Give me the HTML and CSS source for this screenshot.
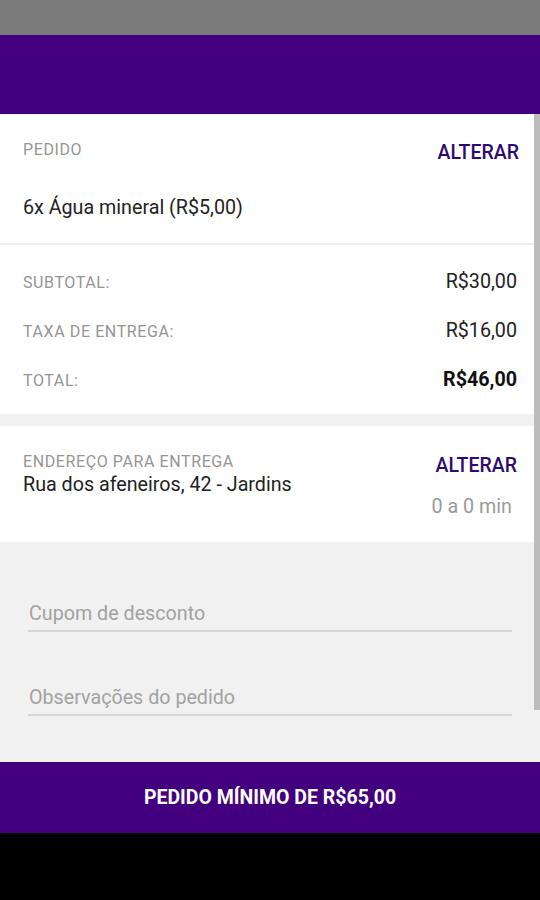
FILE: index.html
```html
<!DOCTYPE html>
<html lang="pt-BR">
<head>
    <meta charset="UTF-8">
    <meta name="viewport" content="width=device-width, initial-scale=1.0">
    <title>Carrinho</title>
    <link rel="stylesheet" href="styles.css">
</head>
<body>
    <div class="status-bar"></div>
    <div class="app-bar"></div>

    <div class="content">
        <div class="scrollbar"></div>

        <div class="card order">
            <div class="card-head">
                <span class="label">PEDIDO</span>
                <a href="#" class="change-link">ALTERAR</a>
            </div>
            <p class="item">6x Água mineral (R$5,00)</p>
        </div>

        <div class="card totals">
            <div class="total-row">
                <span class="label">SUBTOTAL:</span>
                <span class="value">R$30,00</span>
            </div>
            <div class="total-row">
                <span class="label">TAXA DE ENTREGA:</span>
                <span class="value">R$16,00</span>
            </div>
            <div class="total-row">
                <span class="label">TOTAL:</span>
                <span class="value strong">R$46,00</span>
            </div>
        </div>

        <div class="card address">
            <div class="address-info">
                <span class="label">ENDEREÇO PARA ENTREGA</span>
                <span class="street">Rua dos afeneiros, 42 - Jardins</span>
            </div>
            <div class="address-side">
                <a href="#" class="change-link">ALTERAR</a>
                <span class="eta">0 a 0 min</span>
            </div>
        </div>

        <form class="fields">
            <input type="text" class="field" placeholder="Cupom de desconto">
            <input type="text" class="field" placeholder="Observações do pedido">
        </form>
    </div>

    <button class="order-button" disabled>PEDIDO MÍNIMO DE R$65,00</button>
    <div class="nav-bar"></div>
</body>
</html>
```

FILE: styles.css
```css
body {
    font-family: Roboto, "Liberation Sans", sans-serif;
    margin: 0;
    padding: 0;
    width: 540px;
    height: 900px;
    display: flex;
    flex-direction: column;
    background: #000;
    overflow: hidden;
}
.status-bar {
    height: 35px;
    background: #7b7b7b;
}
.app-bar {
    height: 79px;
    background: #42007e;
}
.content {
    position: relative;
    height: 648px;
    background: #f1f1f1;
    display: flex;
    flex-direction: column;
}
.scrollbar {
    position: absolute;
    top: 0;
    right: 0;
    width: 6px;
    height: 596px;
    background: #bcbcbc;
}
.card {
    background: white;
    padding: 0 23px;
}
.label {
    font-size: 16px;
    line-height: 20px;
    letter-spacing: 0.6px;
    color: #959595;
}
.change-link {
    font-size: 19.5px;
    line-height: 24px;
    font-weight: 500;
    color: #2d0a72;
    text-decoration: none;
}
.order {
    padding-top: 25px;
    padding-bottom: 23px;
    border-bottom: 2px solid #efefef;
}
.card-head {
    display: flex;
    justify-content: space-between;
    align-items: flex-start;
}
.card-head .label {
    margin-top: 1px;
}
.card-head .change-link {
    margin-top: 2px;
    margin-right: -2px;
}
.item {
    margin: 31px 0 0;
    font-size: 19.7px;
    line-height: 24px;
    color: #222;
}
.totals {
    padding-top: 24px;
    padding-bottom: 23px;
    display: flex;
    flex-direction: column;
    gap: 25px;
}
.total-row {
    display: flex;
    justify-content: space-between;
    align-items: center;
    height: 24px;
}
.total-row .label {
    margin-top: 3px;
}
.value {
    font-size: 19.7px;
    color: #222;
}
.value.strong {
    font-weight: 700;
    color: #111;
}
.address {
    margin-top: 12px;
    padding-top: 26px;
    padding-bottom: 23px;
    display: flex;
    justify-content: space-between;
}
.address-info {
    display: flex;
    flex-direction: column;
    gap: 1px;
}
.street {
    font-size: 19.7px;
    line-height: 24px;
    color: #222;
}
.address-side {
    display: flex;
    flex-direction: column;
    align-items: flex-end;
    padding-top: 2px;
}
.eta {
    margin-top: 17px;
    margin-right: 5px;
    font-size: 19.7px;
    line-height: 24px;
    color: #9a9a9a;
}
.fields {
    display: flex;
    flex-direction: column;
    gap: 48px;
    padding: 54px 28px 0;
}
.field {
    height: 34px;
    padding: 0 1px;
    border: none;
    border-bottom: 2px solid #d6d6d6;
    background: transparent;
    font-family: Roboto, "Liberation Sans", sans-serif;
    font-size: 19.7px;
    color: #333;
    outline: none;
}
.field::placeholder {
    color: #a2a2a2;
}
.order-button {
    height: 71px;
    border: none;
    background: #42007e;
    color: white;
    font-family: Roboto, "Liberation Sans", sans-serif;
    font-size: 19.5px;
    font-weight: 700;
    padding: 0;
}
.nav-bar {
    flex: 1;
    background: #000;
}
```
